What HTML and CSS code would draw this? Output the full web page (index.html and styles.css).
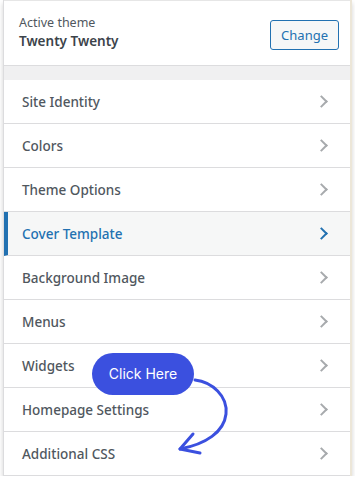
FILE: index.html
```html
<!DOCTYPE html>
<html lang="en">
<head>
    <meta charset="UTF-8">
    <meta name="viewport" content="width=device-width, initial-scale=1.0">
    <title>Customizer</title>
    <link rel="stylesheet" href="styles.css">
</head>
<body>
    <div class="panel">
        <div class="theme-head">
            <div class="theme-info">
                <span class="theme-label">Active theme</span>
                <span class="theme-name">Twenty Twenty</span>
            </div>
            <button class="change-button">Change</button>
        </div>

        <div class="spacer"></div>

        <ul class="sections">
            <li class="section">Site Identity <span class="chevron"></span></li>
            <li class="section">Colors <span class="chevron"></span></li>
            <li class="section">Theme Options <span class="chevron"></span></li>
            <li class="section active">Cover Template <span class="chevron"></span></li>
            <li class="section">Background Image <span class="chevron"></span></li>
            <li class="section">Menus <span class="chevron"></span></li>
            <li class="section">Widgets <span class="chevron"></span></li>
            <li class="section">Homepage Settings <span class="chevron"></span></li>
            <li class="section">Additional CSS <span class="chevron"></span></li>
        </ul>

        <!-- Indicação "Click Here" -->
        <div class="callout">Click Here</div>
        <svg class="callout-arrow" width="80" height="90" viewBox="0 0 80 90">
            <path d="M19 8 C 36 10, 52 24, 50 42 C 48 60, 30 72, 4 77" fill="none" stroke="#3b50df" stroke-width="3" stroke-linecap="round"/>
            <path d="M17 62 L 4 77 L 24 81" fill="none" stroke="#3b50df" stroke-width="3" stroke-linecap="round" stroke-linejoin="round"/>
        </svg>
    </div>
</body>
</html>
```

FILE: styles.css
```css
body {
    margin: 0;
    background-color: #ffffff;
    font-family: "Noto Sans", "Open Sans", sans-serif;
}

.panel {
    position: relative;
    width: 346px;
    margin-left: 3px;
    background-color: #ffffff;
    border-left: 1px solid #dcdcde;
    border-right: 2px solid #ece6d8;
    box-shadow: 0 3px 5px rgba(0, 0, 0, 0.18);
}

.theme-head {
    display: flex;
    justify-content: space-between;
    align-items: center;
    height: 66px;
    padding: 0 11px 0 15px;
    border-top: 1px solid #e6e6e6;
    border-bottom: 1px solid #dcdcde;
    box-sizing: border-box;
}

.theme-info {
    display: flex;
    flex-direction: column;
    margin-top: -1px;
}

.theme-label {
    font-size: 12.5px;
    line-height: 18px;
    color: #50575e;
}

.theme-name {
    font-size: 13.5px;
    line-height: 19px;
    font-weight: 600;
    color: #3c434a;
}

.change-button {
    height: 30px;
    padding: 0 10px;
    margin-top: 3px;
    font-family: inherit;
    font-size: 13px;
    color: #2271b1;
    background-color: #f6f7f7;
    border: 1px solid #2271b1;
    border-radius: 3px;
}

.spacer {
    height: 14px;
    background-color: #f0f0f1;
}

.sections {
    list-style: none;
    margin: 0;
    padding: 0;
}

.section {
    display: flex;
    justify-content: space-between;
    align-items: center;
    height: 44px;
    padding: 0 20px 0 18px;
    box-sizing: border-box;
    border-bottom: 1px solid #dcdcde;
    font-size: 13.5px;
    font-weight: 500;
    color: #50575e;
}

.section.active {
    background-color: #f6f7f7;
    color: #2271b1;
    border-left: 4px solid #2271b1;
    padding-left: 14px;
}

.chevron {
    width: 7px;
    height: 7px;
    margin-right: 4px;
    border-top: 2px solid #a7aaad;
    border-right: 2px solid #a7aaad;
    transform: rotate(45deg);
}

.section.active .chevron {
    border-color: #2271b1;
}

.callout {
    position: absolute;
    left: 88px;
    top: 353px;
    width: 102px;
    height: 42px;
    border-radius: 21px;
    background-color: #3b50df;
    color: #ffffff;
    font-family: Inter, sans-serif;
    font-size: 14px;
    line-height: 42px;
    text-align: center;
}

.callout-arrow {
    position: absolute;
    left: 172px;
    top: 372px;
}
```
